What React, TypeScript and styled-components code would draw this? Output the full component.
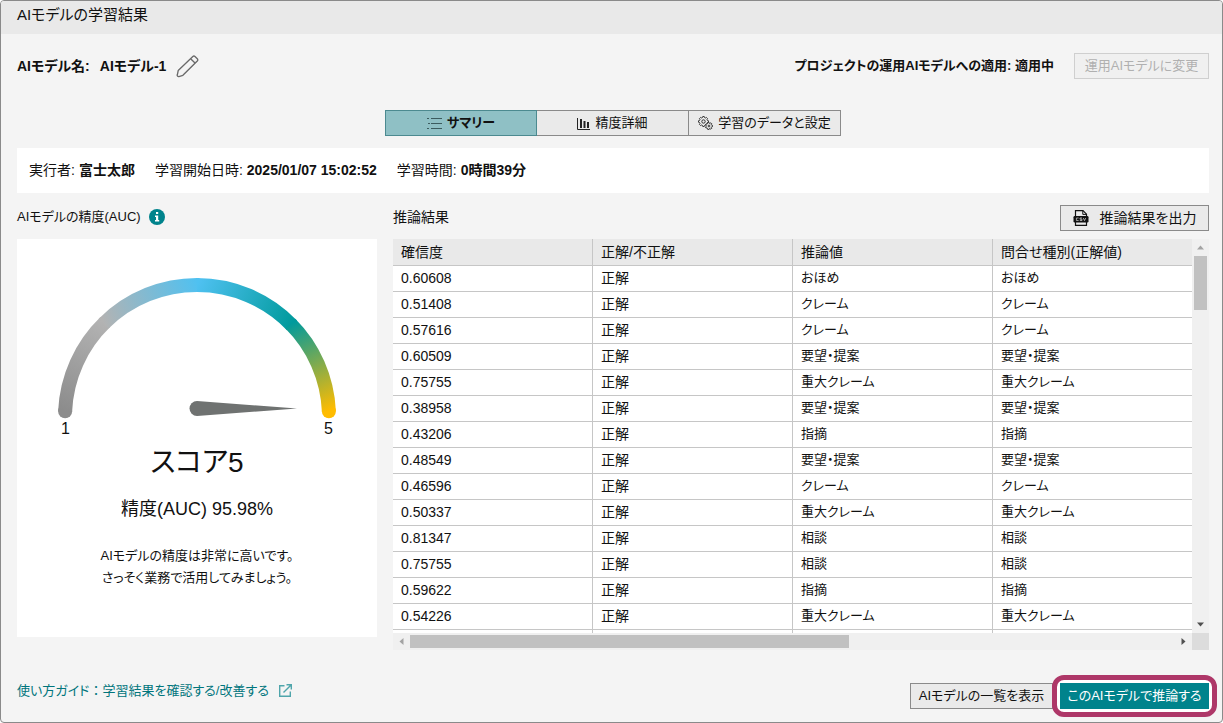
import React from "react";
import styled, { createGlobalStyle, css } from "styled-components";

const GlobalStyle = createGlobalStyle`
  *, *::before, *::after { box-sizing: border-box; }
  html { background: #ffffff; }
  body {
    margin: 0;
    color: #111111;
    font-family: "Liberation Sans", "Noto Sans CJK JP", sans-serif;
    font-size: 14px;
    line-height: 20px;
    font-feature-settings: "palt";
  }
  button { font: inherit; color: inherit; font-feature-settings: inherit; }
`;

const Window = styled.div`
  display: flex;
  flex-direction: column;
  height: 100vh;
  min-height: 640px;
  border: 1px solid #8a8a8a;
  border-radius: 4px;
  background: #f4f4f4;
  overflow: hidden;
`;

const TitleBar = styled.header`
  padding: 3px 16px 8px;
  background: #e9e9e9;
`;

const Title = styled.h1`
  margin: 0;
  font-size: 15px;
  font-weight: 400;
  line-height: 22px;
`;

const Main = styled.main`
  flex: 1;
  min-height: 0;
  display: flex;
  flex-direction: column;
  padding: 19px 13px 13px 16px;
`;

const ModelRow = styled.div`
  display: flex;
  align-items: center;
  justify-content: space-between;
  height: 26px;
  margin-bottom: 31px;
`;

const ModelName = styled.h2`
  display: flex;
  align-items: center;
  gap: 10px;
  margin: 0;
  font-size: 14px;
  line-height: 20px;
`;

const ApplyState = styled.div`
  display: flex;
  align-items: center;
  gap: 20px;
  font-size: 13px;
  font-weight: 700;
`;

const IconButton = styled.button`
  display: flex;
  padding: 0;
  border: 0;
  background: none;
  cursor: pointer;
`;

type Variant = "plain" | "primary";

const Button = styled.button<{ $variant?: Variant; $width: number; $large?: boolean }>`
  display: flex;
  align-items: center;
  justify-content: center;
  gap: 11px;
  height: 26px;
  min-width: ${(p) => p.$width}px;
  padding: 0 6px;
  border: 1px solid #8a8a8a;
  background: #eaeaea;
  font-size: ${(p) => (p.$large ? 14 : 13)}px;
  line-height: 20px;
  font-weight: 400;
  white-space: nowrap;
  cursor: pointer;

  ${(p) =>
    p.$variant === "primary" &&
    css`
      border-color: #00838c;
      background: #00838c;
      color: #ffffff;
    `}

  &:disabled {
    border-color: #cfcfcf;
    background: #f0f0f0;
    color: #b0b0b0;
    cursor: default;
  }
`;

const Tabs = styled.div`
  display: flex;
  justify-content: center;
  margin-bottom: 12px;
`;

const Tab = styled.button<{ $active?: boolean }>`
  display: flex;
  align-items: center;
  justify-content: center;
  gap: 5px;
  width: 152px;
  height: 26px;
  padding: 0;
  border: 1px solid #8a8a8a;
  border-left-width: 0;
  background: #eaeaea;
  font-size: 13px;
  line-height: 20px;
  white-space: nowrap;
  cursor: pointer;

  ${(p) =>
    p.$active &&
    css`
      border-color: #4c8a90;
      border-left-width: 1px;
      background: #8fc0c5;
      font-weight: 700;
    `}
`;

const RunInfo = styled.dl`
  display: flex;
  align-items: center;
  gap: 20px;
  height: 45px;
  margin: 0 0 12px;
  padding: 0 12px 2px;
  background: #ffffff;
`;

const RunItem = styled.div`
  display: flex;
  gap: 4px;
`;

const Term = styled.dt``;

const Detail = styled.dd`
  margin: 0;
  font-weight: 700;
`;

const Columns = styled.div`
  flex: 1;
  min-height: 0;
  display: grid;
  grid-template-columns: 360px minmax(0, 1fr);
  gap: 16px;
`;

const Panel = styled.section`
  display: flex;
  flex-direction: column;
  min-height: 0;
`;

const PanelHead = styled.div`
  display: flex;
  align-items: center;
  justify-content: space-between;
  height: 26px;
  margin-bottom: 8px;
`;

const PanelTitle = styled.h3<{ $compact?: boolean }>`
  display: flex;
  align-items: center;
  gap: 8px;
  margin: 0;
  padding-bottom: 2px;
  font-size: ${(p) => (p.$compact ? 13 : 14)}px;
  font-weight: 400;
`;

const ScoreCard = styled.div`
  flex: 1;
  display: flex;
  flex-direction: column;
  align-items: center;
  margin-bottom: 13px;
  padding-top: 38px;
  background: #ffffff;
  text-align: center;
`;

const Scale = styled.div`
  display: flex;
  justify-content: space-between;
  width: 280px;
  padding: 1px 4px 0;
  font-size: 16px;
  line-height: 18px;
`;

const Score = styled.p`
  margin: 5px 0 0;
  font-size: 28px;
  line-height: 40px;
`;

const Accuracy = styled.p`
  margin: 13px 0 0;
  font-size: 18px;
  line-height: 26px;
`;

const Advice = styled.p`
  margin: 23px 0 0;
  font-size: 13px;
  line-height: 22px;
`;

const ResultFrame = styled.div`
  flex: 1;
  min-height: 0;
  display: grid;
  grid-template-columns: minmax(0, 1fr) 17px;
  grid-template-rows: minmax(0, 1fr) 17px;
`;

const Viewport = styled.div`
  overflow: hidden;
  background: #ffffff;
`;

const Table = styled.table`
  width: 100%;
  table-layout: fixed;
  border-collapse: separate;
  border-spacing: 0;
`;

const HeadCell = styled.th`
  height: 27px;
  padding: 0 8px;
  border-right: 1px solid #c6c6c6;
  border-bottom: 1px solid #c6c6c6;
  background: #e9e9e9;
  font-weight: 400;
  text-align: left;

  &:not(:last-child) {
    width: 200px;
  }

  &:last-child {
    border-right: 0;
  }
`;

const Cell = styled.td<{ $label?: boolean }>`
  height: 26px;
  padding: 0 8px 2px;
  border-right: 1px solid #c6c6c6;
  border-bottom: 1px solid #c6c6c6;
  font-size: ${(p) => (p.$label ? 13 : 14)}px;

  &:last-child {
    border-right: 0;
  }
`;

const ScrollTrack = styled.div<{ $vertical?: boolean }>`
  display: flex;
  flex-direction: ${(p) => (p.$vertical ? "column" : "row")};
  align-items: center;
  justify-content: space-between;
  background: #f0f0f0;
`;

const ScrollThumb = styled.div<{ $vertical?: boolean }>`
  background: #c1c1c1;
  ${(p) =>
    p.$vertical
      ? css`
          width: 13px;
          height: 54px;
          margin-bottom: auto;
        `
      : css`
          width: 55%;
          height: 13px;
          margin-right: auto;
        `}
`;

const ScrollArrow = styled.svg`
  flex: none;
  display: block;
  width: 17px;
  height: 17px;
`;

const Corner = styled.div`
  background: #dcdcdc;
`;

const Footer = styled.footer`
  display: flex;
  justify-content: space-between;
  align-items: center;
  height: 26px;
  margin-top: 33px;
`;

const GuideLink = styled.a`
  display: flex;
  align-items: center;
  gap: 10px;
  padding-bottom: 11px;
  color: #00757c;
  font-size: 13px;
  text-decoration: none;
`;

const FullWidth = styled.span`
  font-feature-settings: normal;
`;

const Actions = styled.div`
  display: flex;
  gap: 7px;
`;

const Highlight = styled.div`
  position: relative;

  &::before {
    content: "";
    position: absolute;
    inset: -8px;
    border: 5px solid #ae3768;
    border-radius: 12px;
    background: #ffffff;
  }

  > * {
    position: relative;
  }
`;

const PencilIcon = () => (
  <svg width="23" height="23" viewBox="0 0 24 24" fill="none" stroke="#6a6a6a" strokeWidth="1.4" strokeLinejoin="round" aria-hidden="true">
    <path d="M1.500 20.200 2.300 16.200 17.600 1.600a1.600 1.600 0 0 1 2.200 0l2.400 2.400a1.600 1.600 0 0 1 0 2.200L7.200 21.200 3 22.500a1.500 1.500 0 0 1-1.500-2.300Z" />
    <path d="m15.300 3.900 4.500 4.500" />
  </svg>
);

const ListIcon = () => (
  <svg width="15" height="12" viewBox="0 0 15 12" aria-hidden="true">
    <path d="M4 1.500h11M4 6.500h11M4 11.500h11" stroke="#3c5c5f" strokeWidth="1" />
    <path d="M0 1.500h2M1 6.500h2M0 11.500h2" stroke="#3c5c5f" strokeWidth="1" />
  </svg>
);

const ChartIcon = () => (
  <svg width="13" height="13" viewBox="0 0 13 13" fill="none" stroke="#222222" aria-hidden="true">
    <path d="M.500 1v11.500H13" strokeWidth="1" />
    <path d="M4 2v9M7.500 4v7M11 5v6" strokeWidth="2" />
  </svg>
);

const gearPath = (cx: number, cy: number, outer: number, inner: number, teeth: number) => {
  const pts: string[] = [];
  const step = (Math.PI * 2) / teeth;
  for (let i = 0; i < teeth; i++) {
    [
      [-0.32, inner],
      [-0.2, outer],
      [0.2, outer],
      [0.32, inner],
    ].forEach(([o, r]) => {
      const a = step * (i + o);
      pts.push(`${(cx + r * Math.cos(a)).toFixed(2)} ${(cy + r * Math.sin(a)).toFixed(2)}`);
    });
  }
  return `M${pts.join("L")}Z`;
};

const GearsIcon = () => (
  <svg width="15" height="14" viewBox="0 0 15 14" fill="none" stroke="#333333" strokeWidth="1" strokeLinejoin="round" aria-hidden="true">
    <path d={gearPath(5.5, 5.5, 5, 4.1, 8)} />
    <circle cx="5.500" cy="5.500" r="1.700" />
    <path d={gearPath(11, 10, 3.6, 2.8, 7)} fill="#eaeaea" />
    <circle cx="11" cy="10" r="0.900" />
  </svg>
);

const InfoIcon = () => (
  <svg width="16" height="16" viewBox="0 0 16 16" role="img" aria-label="情報">
    <circle cx="8" cy="8" r="8" fill="#00838c" />
    <path d="M7 3h2.200v2H7zM6 6.500h3.200v4.500H10.200v1.500H6V11h1V8H6z" fill="#ffffff" />
  </svg>
);

const CsvIcon = () => (
  <svg width="16" height="16" viewBox="0 0 16 16" fill="none" aria-hidden="true">
    <path d="M2.500 6V.700h7.500l3.500 3.500V6M2.500 12v3.300h11V12" stroke="#111111" strokeWidth="1.200" />
    <path d="M9.800.700v3.700h3.700" stroke="#111111" strokeWidth="1" />
    <rect x="0.500" y="6" width="15" height="6.500" rx="1.200" fill="#111111" />
    <path d="M5.600 8H3.400v2.500h2.200M9 8H7v1.200h2v1.300H6.800M10.300 8l1.200 2.600L12.700 8" stroke="#d8d8d8" strokeWidth="0.700" />
  </svg>
);

const ExternalIcon = () => (
  <svg width="13" height="13" viewBox="0 0 13 13" fill="none" stroke="#4fa5ab" strokeWidth="1.400" aria-hidden="true">
    <path d="M5.500 1.700H.700v10.600h10.600V7.500" />
    <path d="M7.500.700h4.800v4.800M12.300.700 4.500 8.500" />
  </svg>
);

/* The dial is a circle of radius 132 cut slightly above its horizontal diameter. */
const CX = 140;
const CY = 140;
const R = 132;
const dialPoint = (deg: number): [number, number] => {
  const a = (deg * Math.PI) / 180;
  return [CX - R * Math.cos(a), CY - R * Math.sin(a)];
};

const dialSegments = [
  { from: 2.5, to: 46, start: "#8c8c8c", end: "#b3b3b3" },
  { from: 45, to: 91, start: "#b3b3b3", end: "#4fc1f1" },
  { from: 90, to: 136, start: "#4fc1f1", end: "#009a9c" },
  { from: 135, to: 177.5, start: "#009a9c", end: "#ffbc00" },
];

const Gauge = () => (
  <svg width="280" height="142" viewBox="0 0 280 142" fill="none" role="img" aria-label="スコア5">
    <defs>
      {dialSegments.map((s, i) => {
        const [x1, y1] = dialPoint(s.from);
        const [x2, y2] = dialPoint(s.to);
        return (
          <linearGradient key={i} id={`dial-${i}`} gradientUnits="userSpaceOnUse" x1={x1} y1={y1} x2={x2} y2={y2}>
            <stop offset="0" stopColor={s.start} />
            <stop offset="1" stopColor={s.end} />
          </linearGradient>
        );
      })}
    </defs>
    {[0, 3].map((i) => {
      const [x, y] = dialPoint(i === 0 ? 2.5 : 177.5);
      return <circle key={i} cx={x} cy={y} r="7" fill={i === 0 ? "#8c8c8c" : "#ffbc00"} />;
    })}
    {dialSegments.map((s, i) => {
      const [x1, y1] = dialPoint(s.from);
      const [x2, y2] = dialPoint(s.to);
      return <path key={i} d={`M${x1} ${y1}A${R} ${R} 0 0 1 ${x2} ${y2}`} stroke={`url(#dial-${i})`} strokeWidth="14" />;
    })}
    <path d="M140 124a7.500 7.500 0 0 0 0 15L240 131.500Z" fill="#6f7271" />
  </svg>
);

const arrows = {
  up: "M8.500 6.500 12 10.500H5Z",
  down: "M8.500 10.500 12 6.500H5Z",
  left: "M6.500 8.500 10.500 5v7Z",
  right: "M10.500 8.500 6.500 5v7Z",
};

const Arrow = ({ to, faint }: { to: keyof typeof arrows; faint?: boolean }) => (
  <ScrollArrow viewBox="0 0 17 17">
    <path d={arrows[to]} fill={faint ? "#a3a3a3" : "#505050"} />
  </ScrollArrow>
);

const headers = ["確信度", "正解/不正解", "推論値", "問合せ種別(正解値)"];

const rows: [string, string][] = [
  ["0.60608", "おほめ"],
  ["0.51408", "クレーム"],
  ["0.57616", "クレーム"],
  ["0.60509", "要望・提案"],
  ["0.75755", "重大クレーム"],
  ["0.38958", "要望・提案"],
  ["0.43206", "指摘"],
  ["0.48549", "要望・提案"],
  ["0.46596", "クレーム"],
  ["0.50337", "重大クレーム"],
  ["0.81347", "相談"],
  ["0.75755", "相談"],
  ["0.59622", "指摘"],
  ["0.54226", "重大クレーム"],
  ["", ""],
];

export default function App() {
  return (
    <>
      <GlobalStyle />
      <Window>
        <TitleBar>
          <Title>AIモデルの学習結果</Title>
        </TitleBar>
        <Main>
          <ModelRow>
            <ModelName>
              <span>AIモデル名:</span>
              <span>AIモデル-1</span>
              <IconButton type="button" aria-label="名前を編集">
                <PencilIcon />
              </IconButton>
            </ModelName>
            <ApplyState>
              <span>プロジェクトの運用AIモデルへの適用: 適用中</span>
              <Button $width={135} type="button" disabled>
                運用AIモデルに変更
              </Button>
            </ApplyState>
          </ModelRow>

          <Tabs role="tablist">
            <Tab type="button" role="tab" aria-selected $active>
              <ListIcon />
              サマリー
            </Tab>
            <Tab type="button" role="tab" aria-selected={false}>
              <ChartIcon />
              精度詳細
            </Tab>
            <Tab type="button" role="tab" aria-selected={false}>
              <GearsIcon />
              学習のデータと設定
            </Tab>
          </Tabs>

          <RunInfo>
            <RunItem>
              <Term>実行者:</Term>
              <Detail>富士太郎</Detail>
            </RunItem>
            <RunItem>
              <Term>学習開始日時:</Term>
              <Detail>2025/01/07 15:02:52</Detail>
            </RunItem>
            <RunItem>
              <Term>学習時間:</Term>
              <Detail>0時間39分</Detail>
            </RunItem>
          </RunInfo>

          <Columns>
            <Panel>
              <PanelHead>
                <PanelTitle $compact>
                  AIモデルの精度(AUC)
                  <InfoIcon />
                </PanelTitle>
              </PanelHead>
              <ScoreCard>
                <Gauge />
                <Scale>
                  <span>1</span>
                  <span>5</span>
                </Scale>
                <Score>スコア5</Score>
                <Accuracy>精度(AUC) 95.98%</Accuracy>
                <Advice>
                  AIモデルの精度は非常に高いです。
                  <br />
                  さっそく業務で活用してみましょう。
                </Advice>
              </ScoreCard>
            </Panel>

            <Panel>
              <PanelHead>
                <PanelTitle>推論結果</PanelTitle>
                <Button $width={149} $large type="button">
                  <CsvIcon />
                  推論結果を出力
                </Button>
              </PanelHead>
              <ResultFrame>
                <Viewport>
                  <Table>
                    <thead>
                      <tr>
                        {headers.map((h) => (
                          <HeadCell key={h} scope="col">
                            {h}
                          </HeadCell>
                        ))}
                      </tr>
                    </thead>
                    <tbody>
                      {rows.map(([confidence, label], i) => (
                        <tr key={i}>
                          <Cell>{confidence}</Cell>
                          <Cell>{confidence && "正解"}</Cell>
                          <Cell $label>{label}</Cell>
                          <Cell $label>{label}</Cell>
                        </tr>
                      ))}
                    </tbody>
                  </Table>
                </Viewport>
                <ScrollTrack $vertical aria-hidden="true">
                  <Arrow to="up" faint />
                  <ScrollThumb $vertical />
                  <Arrow to="down" />
                </ScrollTrack>
                <ScrollTrack aria-hidden="true">
                  <Arrow to="left" faint />
                  <ScrollThumb />
                  <Arrow to="right" />
                </ScrollTrack>
                <Corner />
              </ResultFrame>
            </Panel>
          </Columns>

          <Footer>
            <GuideLink href="#guide">
              <span>
                使い方ガイド<FullWidth>：</FullWidth>学習結果を確認する/改善する
              </span>
              <ExternalIcon />
            </GuideLink>
            <Actions>
              <Button $width={143} type="button">
                AIモデルの一覧を表示
              </Button>
              <Highlight>
                <Button $width={149} $variant="primary" type="button">
                  このAIモデルで推論する
                </Button>
              </Highlight>
            </Actions>
          </Footer>
        </Main>
      </Window>
    </>
  );
}
